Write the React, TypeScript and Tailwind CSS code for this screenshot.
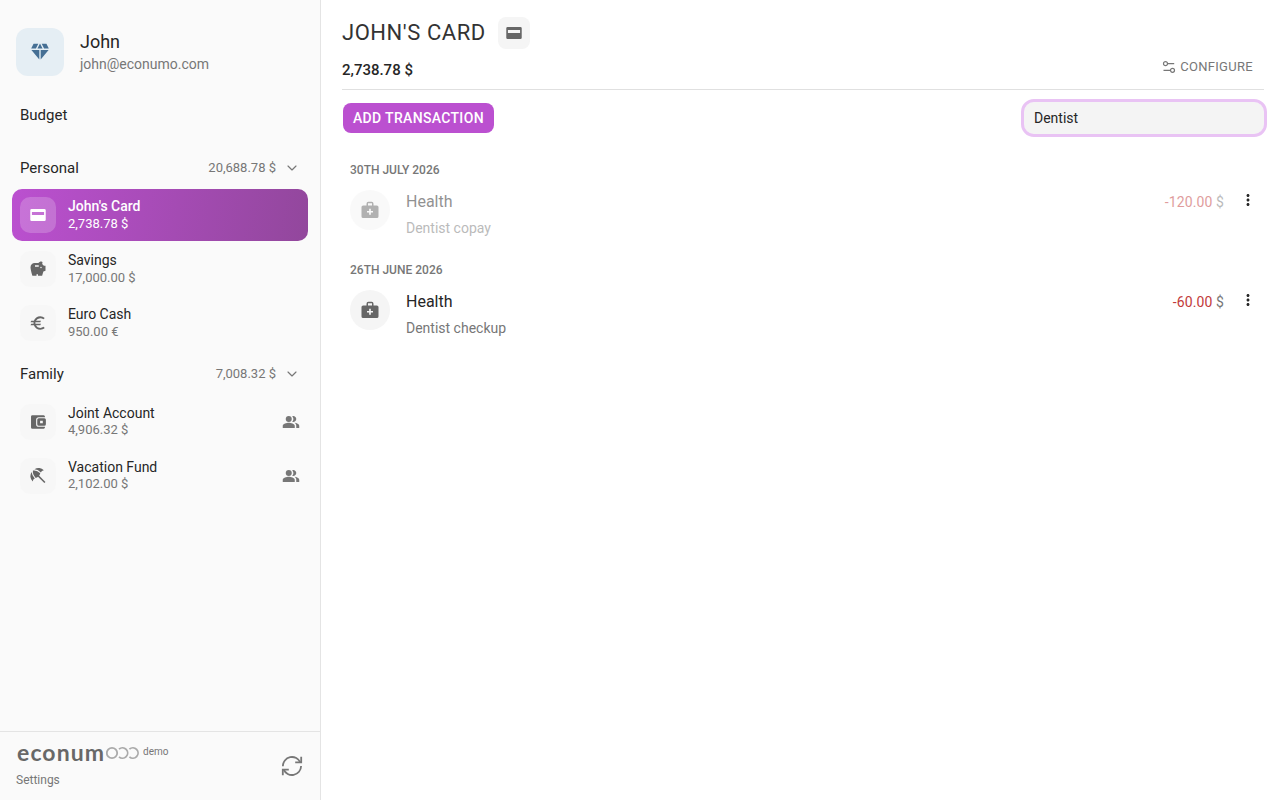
import type { ReactNode } from "react";
import { MdDiamond, MdEuro, MdMoreVert, MdPeopleAlt, MdSavings } from "react-icons/md";
import { ChevronDown } from "lucide-react";

function CardIcon() {
    return (
        <svg width="18" height="18" viewBox="0 0 24 24" fill="currentColor">
            <path fillRule="evenodd" d="M3.500 4h17a1.800 1.800 0 0 1 1.800 1.800v12.400a1.800 1.800 0 0 1-1.800 1.800h-17a1.800 1.800 0 0 1-1.800-1.800V5.800a1.800 1.800 0 0 1 1.800-1.800zm.4 4v4h16.200V8z" />
        </svg>
    );
}

function WalletIcon() {
    return (
        <svg width="18" height="18" viewBox="0 0 24 24" fill="currentColor">
            <path d="M4.500 3h15A2 2 0 0 1 21.300 5v.6h-8.300a3.500 3.500 0 0 0-3.500 3.500v5.800a3.500 3.500 0 0 0 3.500 3.500h8.300v.6a2 2 0 0 1-1.800 2h-15a1.800 1.800 0 0 1-1.800-1.800V4.800A1.800 1.800 0 0 1 4.500 3z" />
            <path fillRule="evenodd" d="M13 7h7.500a2 2 0 0 1 2 2v6a2 2 0 0 1-2 2H13a2 2 0 0 1-2-2V9a2 2 0 0 1 2-2zm1.800 3.200v3.600h3.600v-3.600z" />
        </svg>
    );
}

function UmbrellaIcon() {
    return (
        <svg width="18" height="18" viewBox="0 0 24 24" fill="currentColor">
            <g transform="translate(12 11.500) rotate(-45)">
                <path d="M-4.300 0Q-4.300-6.500 0-9.500Q4.300-6.500 4.300 0Q0 2.500-4.300 0z" />
                <path d="M-10.500 .5A10 9.500 0 0 1-2.600-9.300Q-5.800-6-5.800-.3Q-8-1.500-10.500.5z" />
                <path d="M10.500 .5A10 9.500 0 0 0 2.600-9.300Q5.800-6 5.800-.3Q8-1.500 10.500.5z" />
                <path d="M-1 0h2v13h-2z" />
            </g>
        </svg>
    );
}

function MedicalBagIcon() {
    return (
        <svg width="20" height="20" viewBox="0 0 24 24" fill="currentColor">
            <path fillRule="evenodd" d="M10 2.200h4a2.200 2.200 0 0 1 2.200 2.200V6.500h4a2 2 0 0 1 2 2v11.200a2 2 0 0 1-2 2H3.800a2 2 0 0 1-2-2V8.500a2 2 0 0 1 2-2h4V4.400A2.200 2.200 0 0 1 10 2.200zm-.4 4.300h4.800V4H9.600zM11 10.500v2.600H8.400v2H11v2.600h2v-2.600h2.600v-2H13v-2.600z" />
        </svg>
    );
}

function SlidersIcon() {
    return (
        <svg width="14" height="14" viewBox="0 0 14 14" fill="none" stroke="currentColor" strokeWidth="1.200">
            <circle cx="3.500" cy="3.700" r="2" />
            <circle cx="10.500" cy="10.300" r="2" />
            <path d="M5.500 3.700h6.700M1.500 10.300h7" />
        </svg>
    );
}

function SyncIcon() {
    return (
        <svg width="24" height="24" viewBox="0 0 24 24" fill="none" stroke="currentColor" strokeWidth="1.800">
            <path d="M2.900 12.300A9.100 9.100 0 0 1 20.400 8.600M21.100 12A9.100 9.100 0 0 1 3.600 15.400" />
            <path d="M21.200 2.800v5.600h-6M2.800 21.200v-5.600h6" />
        </svg>
    );
}

type Account = { name: string; balance: string; icon: ReactNode; active?: boolean; shared?: boolean };

const personal: Account[] = [
    { name: "John's Card", balance: "2,738.78 $", icon: <CardIcon />, active: true },
    { name: "Savings", balance: "17,000.00 $", icon: <MdSavings size={18} /> },
    { name: "Euro Cash", balance: "950.00 €", icon: <MdEuro size={18} /> },
];

const family: Account[] = [
    { name: "Joint Account", balance: "4,906.32 $", icon: <WalletIcon />, shared: true },
    { name: "Vacation Fund", balance: "2,102.00 $", icon: <UmbrellaIcon />, shared: true },
];

const transactions = [
    { date: "30th July 2026", category: "Health", note: "Dentist copay", amount: "-120.00", planned: true },
    { date: "26th June 2026", category: "Health", note: "Dentist checkup", amount: "-60.00", planned: false },
];

function FolderHeader({ name, total }: { name: string; total: string }) {
    return (
        <div className="flex h-[22px] items-center px-5">
            <span className="flex-1 text-[15px] text-[#262626]">{name}</span>
            <span className="text-[13px] text-[#777]">{total}</span>
            <ChevronDown size={16} strokeWidth={1.75} className="ml-2 text-[#777]" />
        </div>
    );
}

function AccountRow({ account }: { account: Account }) {
    return (
        <div className={account.active
            ? "flex h-[52px] items-center rounded-[10px] bg-linear-[100deg] from-[#bb50d0] to-[#92479c] px-2 text-white"
            : "flex h-[52px] items-center rounded-[10px] px-2 text-[#262626]"}>
            <div className={account.active
                ? "flex size-9 items-center justify-center rounded-[10px] bg-white/20"
                : "flex size-9 items-center justify-center rounded-[10px] bg-[#f7f7f7] text-[#666]"}>
                {account.icon}
            </div>
            <div className={account.shared ? "ml-3 flex-1 pb-px" : "ml-3 flex-1"}>
                <p className={account.active ? "text-[14px] leading-[17px] font-medium" : "text-[14px] leading-[17px]"}>{account.name}</p>
                <p className={account.active ? "text-[13px] leading-[17px]" : account.shared ? "text-[13px] leading-4 text-[#777]" : "text-[13px] leading-[17px] text-[#777]"}>{account.balance}</p>
            </div>
            {account.shared && <MdPeopleAlt size={18} className="text-[#777]" />}
        </div>
    );
}

function Logo() {
    return (
        <div className="flex h-6 items-start pl-px">
            <span className="-mt-0.5 w-[88px] font-[Lato] text-[23px] leading-6 font-bold tracking-[1.1px] text-[#686868]">econum</span>
            <svg width="34" height="24" viewBox="0 0 34 24" fill="none" stroke="#aaa" strokeWidth="1.800" className="-mt-0.5 ml-px">
                <circle cx="6" cy="13" r="5.200" />
                <path d="M13 9.100A5.200 5.200 0 1 1 13 16.900M23.400 9.100A5.200 5.200 0 1 1 23.400 16.900" />
            </svg>
            <span className="ml-[3px] text-[10px] leading-5 text-[#777]">demo</span>
        </div>
    );
}

function Sidebar() {
    return (
        <aside className="flex w-[321px] shrink-0 flex-col border-r border-[#e4e4e4] bg-[#fafafa]">
            <div className="flex items-center gap-4 px-4 pt-7">
                <div className="flex size-12 items-center justify-center rounded-xl bg-[#e5eef4] text-[#456f94]">
                    <MdDiamond size={22} />
                </div>
                <div>
                    <p className="text-[18px] leading-6 text-[#262626]">John</p>
                    <p className="text-[14px] leading-5 text-[#777]">john@econumo.com</p>
                </div>
            </div>
            <p className="mt-7 px-5 text-[15px] leading-[22px] text-[#262626]">Budget</p>
            <div className="mt-[31px]">
                <FolderHeader name="Personal" total="20,688.78 $" />
                <div className="mt-2.5 space-y-0.5 px-3">
                    {personal.map((a) => <AccountRow key={a.name} account={a} />)}
                </div>
            </div>
            <div className="mt-[14px]">
                <FolderHeader name="Family" total="7,008.32 $" />
                <div className="mt-[11px] space-y-0.5 px-3">
                    {family.map((a) => <AccountRow key={a.name} account={a} />)}
                </div>
            </div>
            <div className="mt-auto flex h-[69px] items-center justify-between border-t border-[#e4e4e4] px-4">
                <div>
                    <Logo />
                    <p className="mt-1 text-[12px] leading-5 text-[#777]">Settings</p>
                </div>
                <div className="text-[#777]">
                    <SyncIcon />
                </div>
            </div>
        </aside>
    );
}

export default function App() {
    return (
        <div className="flex h-[800px] w-[1280px] overflow-hidden bg-white font-[Roboto,sans-serif] text-[#262626]">
            <Sidebar />
            <main className="flex-1 pl-[21px] pr-4">
                <header className="flex h-[90px] items-end justify-between border-b border-[#e0e0e0]">
                    <div className="pb-[9px]">
                        <div className="flex items-center gap-3">
                            <h1 className="text-[22px] leading-8 tracking-[0.55px] text-[#333] uppercase">John's Card</h1>
                            <div className="flex size-8 items-center justify-center rounded-lg bg-[#f5f5f5] text-[#666]">
                                <CardIcon />
                            </div>
                        </div>
                        <p className="mt-[11px] text-[15px] leading-5 font-medium">2,738.78 $</p>
                    </div>
                    <button className="mr-[11px] mb-3 flex items-center gap-1 text-[13px] leading-5 tracking-[0.3px] text-[#777] uppercase">
                        <SlidersIcon />
                        Configure
                    </button>
                </header>
                <div className="mt-3 flex h-8 items-center justify-between">
                    <button className="ml-px h-[30px] rounded-lg bg-[#bb50d0] px-2.5 text-[14px] font-medium tracking-[0.33px] text-white uppercase">Add transaction</button>
                    <input defaultValue="Dentist" className="h-8 w-60 rounded-[10px] bg-[#f4f4f4] px-2.5 text-[14px] outline-3 outline-[#e9c3f4]" />
                </div>
                <div className="mt-[26px]">
                    {transactions.map((t) => (
                        <section key={t.date} className="h-[100px] px-2">
                            <h2 className="text-[12px] leading-5 font-medium text-[#777] uppercase">{t.date}</h2>
                            <div className="mt-[9px] flex items-start">
                                <div className={t.planned ? "flex flex-1 opacity-50" : "flex flex-1"}>
                                    <div className="mt-px flex size-10 items-center justify-center rounded-full bg-[#f5f5f5] text-[#666]">
                                        <MedicalBagIcon />
                                    </div>
                                    <div className="mt-px ml-4 flex-1">
                                        <p className="text-[16px] leading-6">{t.category}</p>
                                        <p className="mt-[3px] text-[14px] leading-[22px] text-[#777]">{t.note}</p>
                                    </div>
                                    <p className="mt-px text-[14px] leading-6 tracking-[0.1px] text-[#c23a3a]">{t.amount} <span className="text-[#777]">$</span></p>
                                </div>
                                <MdMoreVert size={18} className="mt-0.5 -mr-px ml-[15px]" />
                            </div>
                        </section>
                    ))}
                </div>
            </main>
        </div>
    );
}
